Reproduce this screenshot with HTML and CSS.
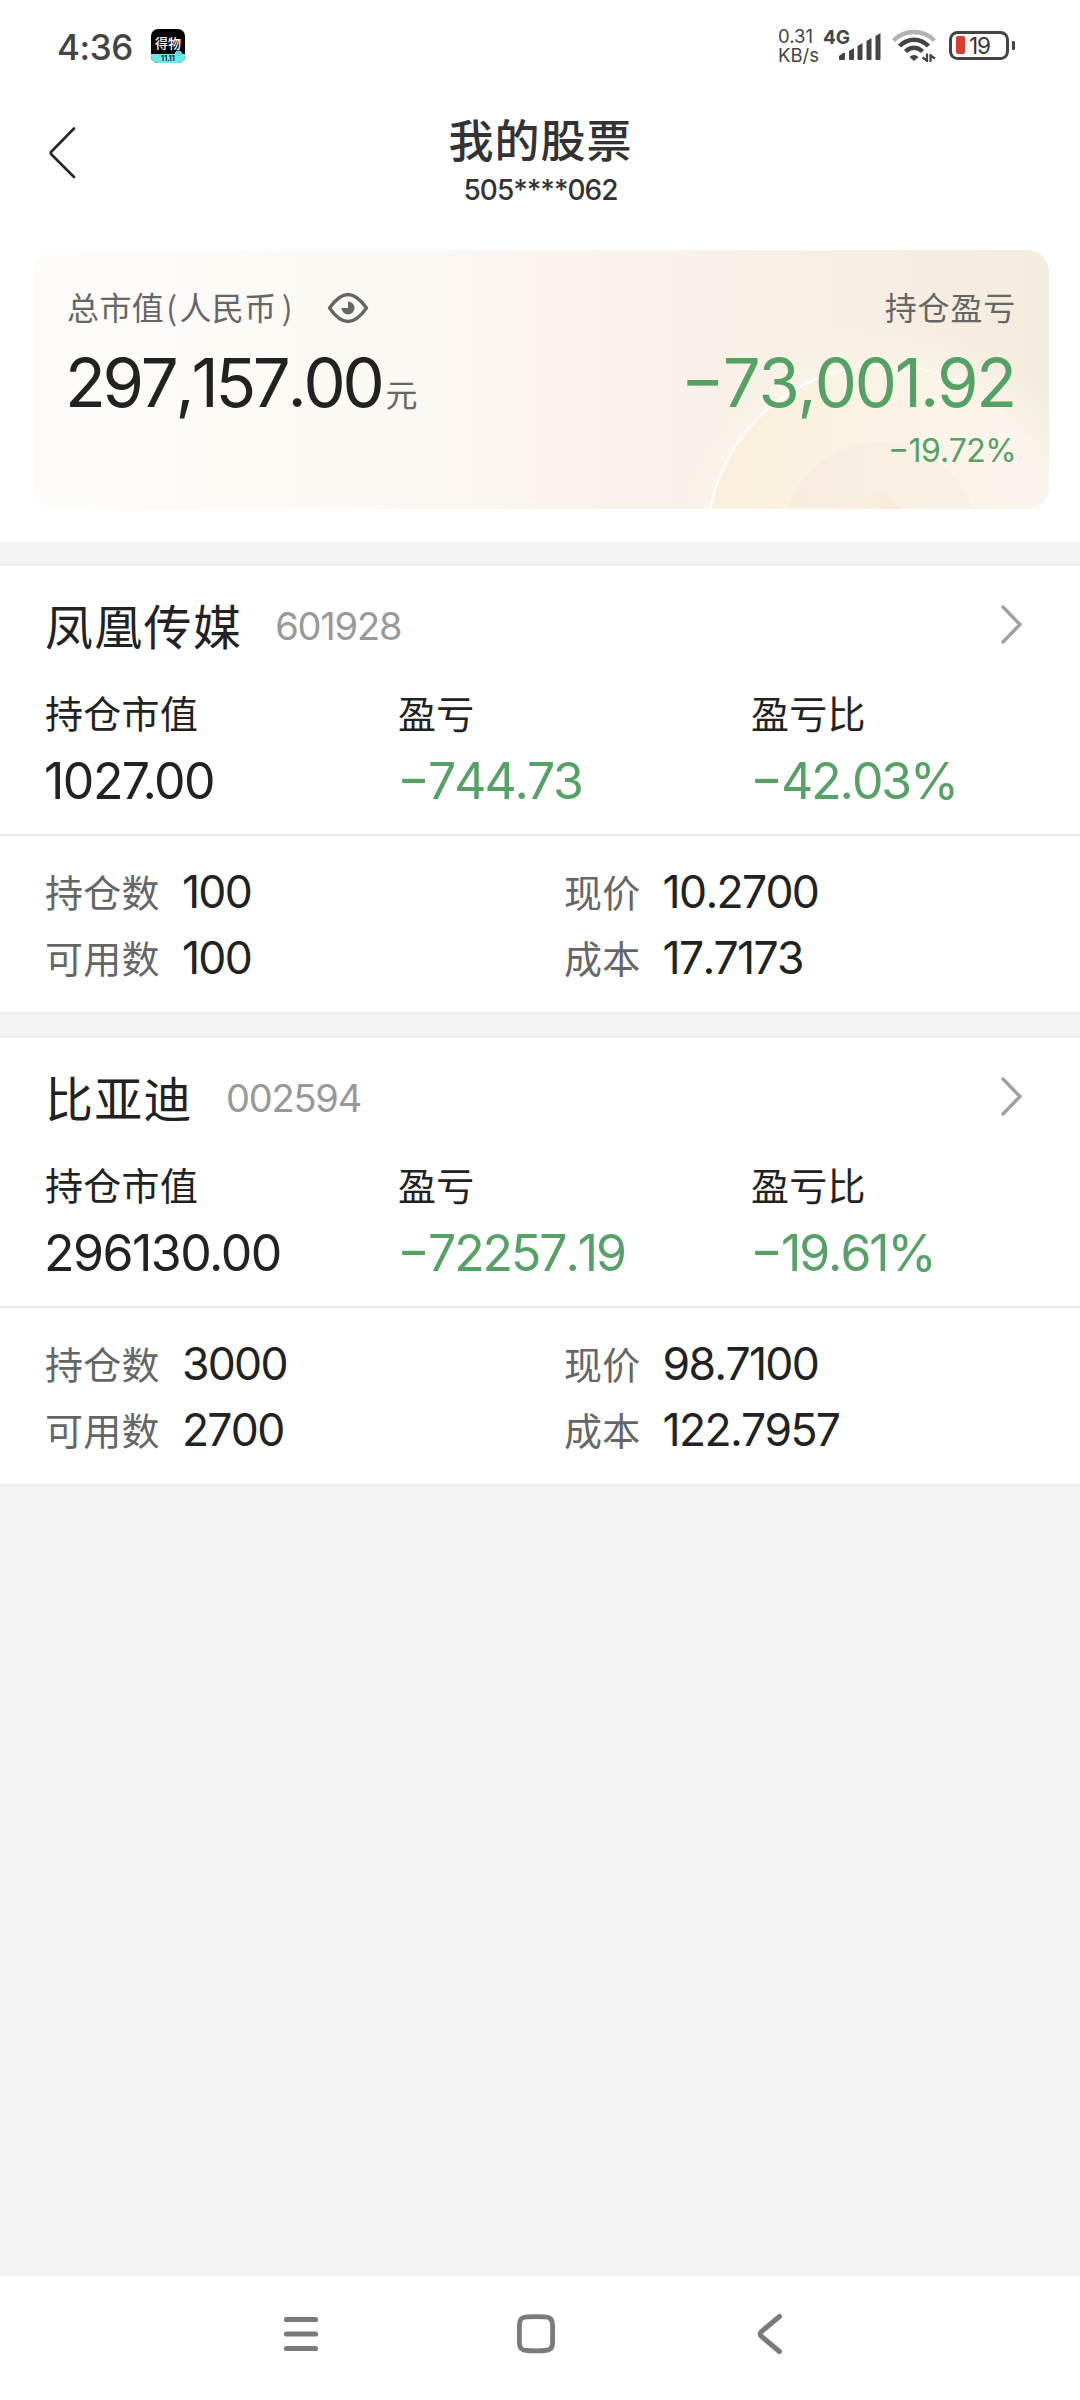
FILE: index.html
```html
<!DOCTYPE html>
<html lang="zh-CN">
<head>
<meta charset="utf-8">
<title>我的股票</title>
<link rel="stylesheet" href="styles.css">
</head>
<body>
<div class="screen">
  <div class="status">
    <span class="clock">4:36</span>
    <svg class="app" width="34" height="34" viewBox="0 0 34 34">
      <defs><clipPath id="appclip"><rect width="34" height="34" rx="7"/></clipPath></defs>
      <g clip-path="url(#appclip)">
        <rect width="34" height="34" fill="#000"/>
        <path d="M0 25H24Q24 21 28 21.500Q31 22 31 25H34V34H0Z" fill="#6be8ea"/>
        <path d="M25 24.500l4-2M26.500 26.500l3.500-1.500" stroke="#31a9ad" stroke-width=".8"/>
        <text class="app-name" x="17" y="18.500" text-anchor="middle">得物</text>
        <text class="app-tag" x="17" y="32" text-anchor="middle">11.11</text>
      </g>
    </svg>
    <div class="net"><span>0.31</span><span>KB/s</span></div>
    <span class="gen">4G</span>
    <svg class="signal" width="42" height="28" viewBox="0 0 42 28" fill="#444">
      <path d="M0 23L4 20H6V26Q6 27 5 27H1Q0 27 0 26Z"/>
      <path d="M10 18L15 15V26Q15 27 14 27H11Q10 27 10 26Z"/>
      <path d="M18.500 13L23.500 10V26Q23.500 27 22.500 27H19.500Q18.500 27 18.500 26Z"/>
      <path d="M27.500 8L32.500 5V26Q32.500 27 31.500 27H28.500Q27.500 27 27.500 26Z"/>
      <path d="M36.500 3L41.500 0V26Q41.500 27 40.500 27H37.500Q36.500 27 36.500 26Z"/>
    </svg>
    <svg class="wifi" width="44" height="34" viewBox="0 0 44 34" fill="none" stroke="#444" stroke-width="4.400">
      <path d="M1.500 11.500Q10 3 22 3T42.500 11.500" stroke="#b3b3b3"/>
      <path d="M7.500 17Q14 10.800 22 10.800T36.500 17"/>
      <path d="M13.500 22.500Q17.500 18.700 22 18.700T30.500 22.500"/>
      <path d="M17.500 28Q22 24 26.500 28L22 32Z" fill="#444" stroke="none"/>
      <path d="M35 24.500V33M35 31.500L30.500 28.500M38.500 33V25M38.500 26.500L43 29.500" stroke-width="2.200"/>
    </svg>
    <svg class="battery" width="68" height="30" viewBox="0 0 68 30">
      <rect x="1.500" y="1.500" width="57" height="26" rx="7" fill="none" stroke="#444" stroke-width="3"/>
      <rect x="7" y="5" width="9" height="18" rx="2" fill="#d73d32"/>
      <path d="M63 10h1.500q1.500 0 1.500 1.500v6q0 1.500-1.500 1.500H63z" fill="#444"/>
      <text class="level" x="30.500" y="22.500" text-anchor="middle">19</text>
    </svg>
  </div>

  <header class="header">
    <svg class="back" width="30" height="56" viewBox="0 0 30 56"><path d="M25 3.500L2.500 26.500Q1 28 2.500 29.500L25 52" fill="none" stroke="#262626" stroke-width="2.600" stroke-linecap="round"/></svg>
    <div class="heading">
      <h1 class="title">我的股票</h1>
      <div class="account">505****062</div>
    </div>
  </header>

  <section class="summary-wrap">
    <div class="summary">
      <svg class="decor" width="1016" height="259" viewBox="0 0 1016 259">
        <defs>
          <radialGradient id="halo"><stop offset=".74" stop-color="#faf6ec"/><stop offset="1" stop-color="#f8f1e6" stop-opacity="0"/></radialGradient>
          <linearGradient id="outer"><stop offset="0" stop-color="#fbefdd"/><stop offset=".3" stop-color="#faf2e1"/><stop offset=".7" stop-color="#fbf4e8"/><stop offset="1" stop-color="#fdf4ed"/></linearGradient>
          <linearGradient id="inner"><stop offset="0" stop-color="#f8ecdf"/><stop offset="1" stop-color="#f9f1e6"/></linearGradient>
          <linearGradient id="rim"><stop offset="0" stop-color="#fff"/><stop offset=".5" stop-color="#fff" stop-opacity=".8"/><stop offset=".8" stop-color="#fff" stop-opacity="0"/></linearGradient>
          <linearGradient id="peak"><stop offset="0" stop-color="#fbecd6" stop-opacity="0"/><stop offset="1" stop-color="#f8e8d4"/></linearGradient>
        </defs>
        <circle cx="852" cy="293" r="222" fill="url(#halo)"/>
        <circle cx="852" cy="293" r="178" fill="url(#outer)" stroke="url(#rim)" stroke-width="2"/>
        <circle cx="847" cy="290" r="98" fill="url(#inner)"/>
        <path d="M828 259L842 244Q846 240 851 244L867 259Z" fill="url(#peak)"/>
      </svg>
      <div class="summary-col">
        <div class="caption"><span>总市值</span><span class="open">(</span><span>人民币</span><span class="close">)</span>
          <svg class="eye" width="42" height="32" viewBox="0 0 42 32"><path d="M2.500 16Q12 2.500 21 2.500T39.500 16Q30 29.500 21 29.500T2.500 16Z" fill="none" stroke="#666" stroke-width="3.400" stroke-linejoin="round"/><path d="M21 9.500A6.500 6.500 0 1 1 14.500 16H21Z" fill="#666"/></svg>
        </div>
        <div class="total">297,157.00<span class="unit">元</span></div>
      </div>
      <div class="summary-col right">
        <div class="caption">持仓盈亏</div>
        <div class="total down">−73,001.92</div>
        <div class="ratio down">−19.72%</div>
      </div>
    </div>
  </section>

  <main class="stocks">
    <article class="stock">
      <div class="upper">
        <div class="name-row"><h2 class="name">凤凰传媒</h2><span class="code">601928</span>
          <svg class="more" width="24" height="40" viewBox="0 0 24 40"><path d="M3 3L20 20.500L3 38" fill="none" stroke="#a0a0a0" stroke-width="3.400" stroke-linecap="round" stroke-linejoin="round"/></svg></div>
        <div class="figures">
          <div><div class="label">持仓市值</div><div class="value">1027.00</div></div>
          <div><div class="label">盈亏</div><div class="value down">−744.73</div></div>
          <div><div class="label">盈亏比</div><div class="value down">−42.03%</div></div>
        </div>
      </div>
      <div class="details">
        <div class="pair"><span class="key">持仓数</span><span class="num">100</span></div>
        <div class="pair"><span class="key">现价</span><span class="num">10.2700</span></div>
        <div class="pair"><span class="key">可用数</span><span class="num">100</span></div>
        <div class="pair"><span class="key">成本</span><span class="num">17.7173</span></div>
      </div>
    </article>
    <article class="stock">
      <div class="upper">
        <div class="name-row"><h2 class="name">比亚迪</h2><span class="code">002594</span>
          <svg class="more" width="24" height="40" viewBox="0 0 24 40"><path d="M3 3L20 20.500L3 38" fill="none" stroke="#a0a0a0" stroke-width="3.400" stroke-linecap="round" stroke-linejoin="round"/></svg></div>
        <div class="figures">
          <div><div class="label">持仓市值</div><div class="value">296130.00</div></div>
          <div><div class="label">盈亏</div><div class="value down">−72257.19</div></div>
          <div><div class="label">盈亏比</div><div class="value down">−19.61%</div></div>
        </div>
      </div>
      <div class="details">
        <div class="pair"><span class="key">持仓数</span><span class="num">3000</span></div>
        <div class="pair"><span class="key">现价</span><span class="num">98.7100</span></div>
        <div class="pair"><span class="key">可用数</span><span class="num">2700</span></div>
        <div class="pair"><span class="key">成本</span><span class="num">122.7957</span></div>
      </div>
    </article>
  </main>

  <nav class="nav">
    <svg width="44" height="44" viewBox="0 0 44 44" fill="none" stroke="#7b7b7b" stroke-width="5.200" stroke-linecap="round"><path d="M6.500 7.500H35.500M6.500 22H35.500M6.500 36.500H35.500"/></svg>
    <svg width="44" height="44" viewBox="0 0 44 44" fill="none" stroke="#7b7b7b" stroke-width="4.800"><path d="M5.400 13Q5.400 4.900 13 4.900Q22 4.300 31 4.900Q38.600 4.900 38.600 13V31Q38.600 38.500 31 38.500Q22 39.100 13 38.500Q5.400 38.500 5.400 31Z"/></svg>
    <svg width="44" height="44" viewBox="0 0 44 44" fill="none" stroke="#7b7b7b" stroke-width="5" stroke-linecap="round"><path d="M31.500 4.500L13.500 19.500Q11 22 13.500 24.500L31.500 39.500"/></svg>
  </nav>
</div>
</body>
</html>
```
FILE: styles.css
```css
* { box-sizing: border-box; }
body { margin: 0; background: #fff; }
svg { display: block; flex: none; }
h1, h2 { margin: 0; }

.screen {
  width: 1080px;
  height: 2400px;
  display: flex;
  flex-direction: column;
  background: #f4f4f4;
  color: #222;
  font-family: Inter, "Noto Sans CJK SC", sans-serif;
  white-space: nowrap;
}

/* status bar */
.status {
  height: 92px;
  padding-left: 57px;
  display: flex;
  align-items: flex-start;
  background: #fff;
  color: #444;
}
.clock { width: 94px; padding-top: 26px; font-size: 35px; line-height: 42px; font-weight: 500; letter-spacing: -.4px; }
.app { margin-top: 29px; }
.app-name { font: 500 13px "Noto Sans CJK SC", sans-serif; fill: #fff; }
.app-tag { font: 700 7px Inter, sans-serif; fill: #123; }
.net { margin-left: 593px; width: 45px; padding-top: 27px; display: flex; flex-direction: column; font-size: 18.500px; line-height: 19px; }
.gen { width: 28px; padding-top: 28px; font-size: 19px; line-height: 19px; font-weight: 700; }
.signal { margin: 33px 0 0 -12px; }
.wifi { margin: 29px 0 0 11px; }
.battery { margin: 31px 0 0 13px; }
.level { font: 400 22.500px Inter, sans-serif; fill: #333; letter-spacing: -1px; }

/* page header */
.header { height: 158px; padding-left: 49px; display: flex; background: #fff; color: #333; }
.back { margin-top: 33px; }
.heading { width: 923px; text-align: center; }
.title { margin-top: 14px; font: 500 45px/66px "Noto Sans CJK SC", sans-serif; letter-spacing: 1px; }
.account { font-size: 28px; line-height: 36px; font-weight: 500; letter-spacing: -1px; }

/* totals */
.summary-wrap { height: 292px; padding: 0 31px 0 33px; background: #fff; }
.summary {
  position: relative;
  height: 259px;
  padding: 33px 33px 0 34px;
  display: flex;
  justify-content: space-between;
  border-radius: 22px;
  overflow: hidden;
  background: linear-gradient(90deg, #fefcfa, #fcf9f4 35%, #faf4ec 52%, #f9f1e7 68%, #f6eee2 85%, #f4ecdf);
}
.decor { position: absolute; left: 0; top: 0; }
.summary-col { position: relative; font-kerning: none; }
.right { text-align: right; }
.caption { display: flex; height: 46px; font: 400 32px/46px "Noto Sans CJK SC", sans-serif; letter-spacing: .4px; color: #666; }
.open { padding: 0 2px; }
.close { padding-left: 5px; }
.right .caption { justify-content: flex-end; letter-spacing: .8px; }
.eye { margin: 9px 0 0 34px; }
.total { height: 80px; margin: 14px 0 0 -2px; font-size: 67px; line-height: 80px; letter-spacing: -3.300px; font-feature-settings: "case"; }
.right .total { letter-spacing: -2.200px; margin-right: 1px; }
.unit { margin-left: 4px; font: 400 32px "Noto Sans CJK SC", sans-serif; letter-spacing: 0; color: #666; }
.ratio { margin-top: 8px; font-size: 32px; line-height: 40px; letter-spacing: -.6px; font-feature-settings: "case"; }
.down { color: #55a166; }

/* holdings */
.stocks { flex: 1; padding-top: 22px; display: flex; flex-direction: column; gap: 22px; }
.stock { height: 450px; background: #fff; border-top: 2px solid #ececec; border-bottom: 2px solid #ececec; }
.upper { height: 270px; padding: 24px 56px 0 45px; border-bottom: 2px solid #ececec; }
.name-row { display: flex; align-items: center; height: 68px; }
.name { font: 400 48px/68px "Noto Sans CJK SC", sans-serif; letter-spacing: 1.300px; }
.code { margin-left: 33px; padding-top: 4px; font-size: 38px; line-height: 46px; letter-spacing: -1.200px; color: #999; }
.more { margin-left: auto; }
.figures { margin-top: 29px; display: grid; grid-template-columns: 353px 353px 1fr; }
.label { font: 400 38px/50px "Noto Sans CJK SC", sans-serif; letter-spacing: .300px; }
.value { margin: 14px 0 0 -1px; font-size: 50px; line-height: 60px; letter-spacing: -1.500px; }
.value.down { letter-spacing: -2.100px; font-kerning: none; font-feature-settings: "case"; }
.details { padding: 25px 45px 0; display: grid; grid-template-columns: 519px 1fr; row-gap: 6px; }
.pair { height: 60px; display: flex; align-items: center; gap: 22px; }
.key { font: 400 38px/60px "Noto Sans CJK SC", sans-serif; letter-spacing: .300px; color: #666; }
.num { padding-top: 1px; font-size: 44.500px; line-height: 60px; letter-spacing: -1.700px; font-kerning: none; }

/* system navigation */
.nav { height: 124px; padding: 36px 288px 0 280px; display: flex; justify-content: space-between; background: #fff; }
```
